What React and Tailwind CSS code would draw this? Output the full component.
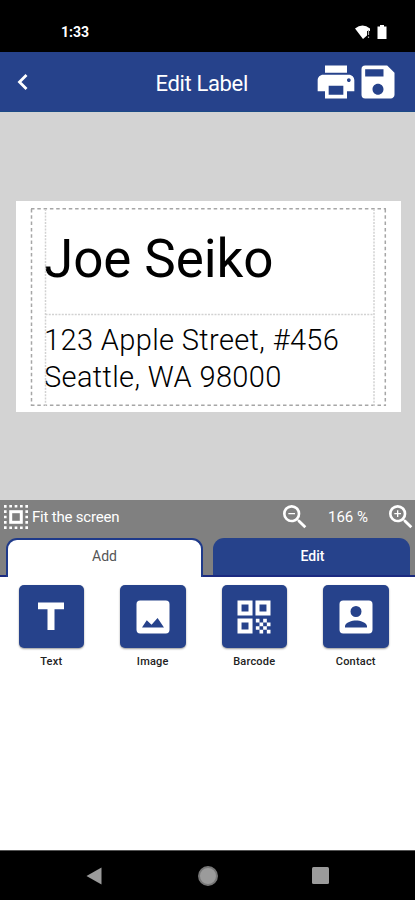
import { MdPrint, MdSave, MdZoomOut, MdZoomIn } from "react-icons/md";

const tools = [
  { name: "Text", icon: <TextIcon /> },
  { name: "Image", icon: <ImageIcon /> },
  { name: "Barcode", icon: <BarcodeIcon /> },
  { name: "Contact", icon: <ContactIcon /> },
];

function TextIcon() {
  return (
    <svg viewBox="0 0 44 44" className="size-11" fill="currentColor">
      <path d="M9 7.500h26v6.800h-9.500v20.700h-7V14.300H9z" />
    </svg>
  );
}

function ImageIcon() {
  return (
    <svg viewBox="0 0 24 24" className="size-11" fill="currentColor" fillRule="evenodd">
      <path d="M5 3h14a2 2 0 0 1 2 2v14a2 2 0 0 1-2 2H5a2 2 0 0 1-2-2V5a2 2 0 0 1 2-2zM6 17.700h12l-3.500-5.200-3.300 3.700-2.600-2.400z" />
    </svg>
  );
}

function BarcodeIcon() {
  return (
    <svg viewBox="0 0 24 24" className="size-11" fill="currentColor" fillRule="evenodd">
      <path d="M3 3h8.200v8.200H3zM5.200 5.200v3.800h3.800V5.200zM12.800 3h8.200v8.200h-8.200zM15 5.200v3.800h3.800V5.200zM3 12.800h8.200v8.200H3zM5.200 15v3.800h3.800v-3.800z" />
      <path d="M13 13h2v2h-2zM17 13h2v2h-2zM15 15h2v2h-2zM19 15h2v2h-2zM13 17h2v2h-2zM17 17h2v2h-2zM15 19h2v2h-2zM19 19h2v2h-2z" />
    </svg>
  );
}

function ContactIcon() {
  return (
    <svg viewBox="0 0 24 24" className="size-11" fill="currentColor" fillRule="evenodd">
      <path d="M5 3h14a2 2 0 0 1 2 2v14a2 2 0 0 1-2 2H5a2 2 0 0 1-2-2V5a2 2 0 0 1 2-2zM12 6a3 3 0 1 0 0 6 3 3 0 0 0 0-6zM6 17.700h12v-.7c0-2-4-3.100-6-3.100s-6 1.100-6 3.100z" />
    </svg>
  );
}

function StatusBar() {
  return (
    <div className="flex h-[52px] items-end bg-black pr-7 pb-3 pl-[61px] text-white">
      <p className="text-[14px] leading-4 font-bold">1:33</p>
      <div className="mb-px ml-auto flex items-center gap-1.5">
        <svg viewBox="0 0 16 14" className="h-3.5 w-4">
          <path d="M0 3.500Q7.500-2.500 15 3.500V6h-3v4.500L8 14z" fill="#fff" />
          <path d="M13.500 5v5M13.500 11.500V13" stroke="#aaa" strokeWidth="1.200" />
        </svg>
        <svg viewBox="0 0 10 14" className="h-3.5 w-2.5">
          <path d="M3 0h4v1.500h2.500V14H.5V1.500H3z" fill="#fff" />
        </svg>
      </div>
    </div>
  );
}

function Header() {
  return (
    <div className="flex h-[60px] items-center border-b border-[#1b4a85] bg-[#26428b] text-white">
      <svg viewBox="0 0 12 18" className="ml-[17px] h-[18px] w-3">
        <path d="M9.500 2 2.500 9l7 7" fill="none" stroke="#fff" strokeWidth="2.800" />
      </svg>
      <h1 className="ml-[126.500px] pt-1 text-[22px] leading-7 tracking-[-0.35px]">Edit Label</h1>
      <div className="ml-auto flex pr-[15px]">
        <MdPrint className="size-11" />
        <MdSave className="-ml-0.5 size-11" />
      </div>
    </div>
  );
}

// print margin and text frames, drawn over the label
function Guides() {
  return (
    <svg viewBox="0 0 385 211" className="absolute inset-0 h-full w-full" fill="none" strokeWidth="1.500">
      <path d="M15 7.800h355M15 204.300h355M15.500 8v197M369.300 8v197" stroke="#a6a6a6" strokeDasharray="3.500 2.800" />
      <path d="M29.500 8v197M358 8v197M29.500 113.500h329" stroke="#d2d2d2" strokeDasharray="2 1.250" />
    </svg>
  );
}

function Label() {
  return (
    <div className="relative h-[211px] w-[385px] bg-white pt-[27px] pl-[29px] text-black">
      <Guides />
      <p className="-ml-px text-[53px] leading-[62px] tracking-[-0.1px] whitespace-nowrap">Joe Seiko</p>
      <p className="mt-8 -ml-px text-[29px] leading-[37px] font-light tracking-[0.36px] whitespace-nowrap">
        123 Apple Street, #456
        <br />
        Seattle, WA 98000
      </p>
    </div>
  );
}

function ZoomBar() {
  return (
    <div className="flex h-[33px] items-center text-white">
      <svg viewBox="0 0 24 24" className="ml-1 size-6" fill="none" stroke="#fff">
        <rect x="1.300" y="1.300" width="21.400" height="21.400" strokeWidth="2.600" strokeDasharray="2.675" strokeDashoffset="1.337" />
        <rect x="6.700" y="6.700" width="10.600" height="10.600" strokeWidth="3" />
      </svg>
      <p className="ml-1 pt-0.5 text-[15px] tracking-[-0.2px]">Fit the screen</p>
      <MdZoomOut className="ml-auto size-8" />
      <p className="w-[74px] pt-0.5 text-center text-[15px]">166 %</p>
      <MdZoomIn className="-mr-0.5 size-8" />
    </div>
  );
}

export default function App() {
  return (
    <div className="flex h-[900px] w-[415px] flex-col overflow-hidden bg-white font-['Roboto',sans-serif]">
      <StatusBar />
      <Header />
      <div className="h-[388px] bg-[#d3d3d3] pt-[89px] pl-4">
        <Label />
      </div>
      <div className="h-[77px] bg-[#808080]">
        <ZoomBar />
        {/* the open tab has no bottom line, so the line is drawn piece by piece */}
        <div className="flex h-11 items-stretch pt-[5px] text-[14px]">
          <div className="w-1.5 border-b-2 border-[#1b2a80]" />
          <div className="w-[197px] rounded-t-[11px] border-2 border-b-0 border-[#1f3a8a] bg-white pt-1.5 text-center text-[#555]">Add</div>
          <div className="w-2.5 border-b-2 border-[#1b2a80]" />
          <div className="w-[197px] rounded-t-[11px] border-b-2 border-[#1b2a80] bg-[#26428b] pt-2 pl-0.5 text-center font-medium text-white">Edit</div>
          <div className="flex-1 border-b-2 border-[#1b2a80]" />
        </div>
      </div>
      <div className="flex gap-9 pt-2 pl-[18.500px]">
        {tools.map((tool) => (
          <div key={tool.name} className="flex w-[65.500px] flex-col items-center">
            <div className="flex h-[63px] w-full items-center justify-center rounded-[5px] bg-[#26428b] text-white shadow-[0_1px_2px_rgba(0,0,0,0.4)]">
              {tool.icon}
            </div>
            <p className="mt-1.5 text-[11px] leading-4 font-medium tracking-[0.2px] text-[#222]">{tool.name}</p>
          </div>
        ))}
      </div>
      <div className="mt-auto flex h-[50px] items-center border-t border-[#555] bg-black">
        <svg viewBox="0 0 16 18" className="ml-[86px] h-[18px] w-4">
          <path d="M15.500.5v17L.5 9z" fill="#9b9b9b" />
        </svg>
        <div className="ml-24 size-5 rounded-full border-2 border-[#777] bg-[#9b9b9b]" />
        <div className="ml-[94px] size-[17px] rounded-[1.500px] bg-[#9b9b9b]" />
      </div>
    </div>
  );
}
